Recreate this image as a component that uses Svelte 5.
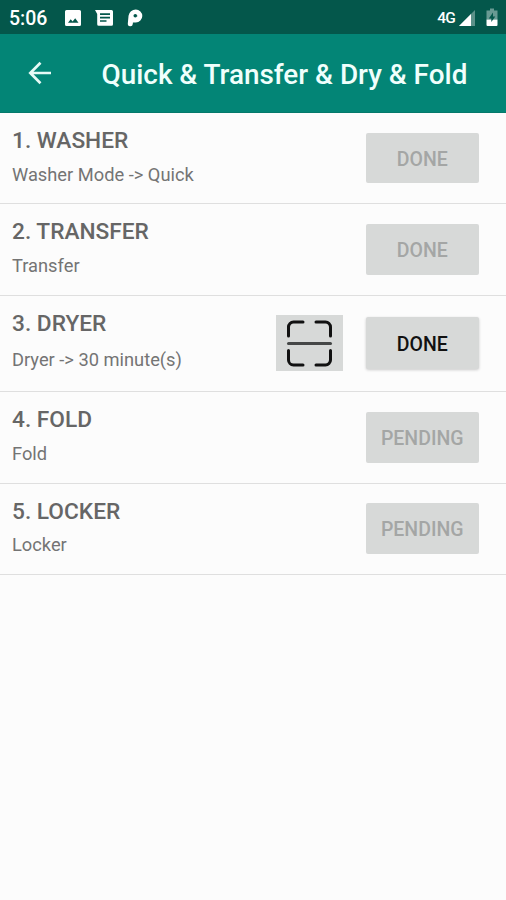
<script>
	let title = 'Quick & Transfer & Dry & Fold';

	let steps = $state([
		{ name: 'WASHER', detail: 'Washer Mode -> Quick', action: 'DONE', active: false },
		{ name: 'TRANSFER', detail: 'Transfer', action: 'DONE', active: false },
		{ name: 'DRYER', detail: 'Dryer -> 30 minute(s)', action: 'DONE', active: true },
		{ name: 'FOLD', detail: 'Fold', action: 'PENDING', active: false },
		{ name: 'LOCKER', detail: 'Locker', action: 'PENDING', active: false }
	]);
</script>

<div class="screen">
	<div class="status-bar">
		<span class="time">5:06</span>
		<svg width="18" height="18" viewBox="0 0 18 18">
			<path fill="#fff" fill-rule="evenodd" d="M2.500 1h13A1.500 1.500 0 0 1 17 2.500v13a1.500 1.500 0 0 1-1.500 1.500h-13A1.500 1.500 0 0 1 1 15.500v-13A1.500 1.500 0 0 1 2.500 1zM4 13.800h10.500l-3.300-4.500-2.600 3.200-1.900-2.200z" />
		</svg>
		<svg class="message" width="20" height="18" viewBox="0 0 20 18">
			<path fill="#fff" d="M1 1h16.500A1.500 1.500 0 0 1 19 2.500v12.700a1.500 1.500 0 0 1-1.500 1.500H4.700a1.500 1.500 0 0 1-1.500-1.500V5z" />
			<path d="M6 5.200h10M6 8.600h10M6 12h6.500" stroke="#04574b" stroke-width="1.700" />
		</svg>
		<svg class="parking" width="17" height="20" viewBox="0 0 17 20">
			<path d="M3.300 15.800 4 8.200A4.900 4.900 0 0 1 8.800 4a4 4 0 0 1 0 8H6" fill="none" stroke="#fff" stroke-width="5" stroke-linecap="round" stroke-linejoin="round" />
			<path d="M4 5h6v7H4z" fill="#fff" />
			<circle cx="8.300" cy="7.700" r="1.800" fill="#04574b" />
		</svg>
		<span class="network">4G</span>
		<svg class="signal" width="18" height="18" viewBox="0 0 18 18">
			<path d="M17 1v16H1z" fill="#fff" opacity=".35" />
			<path d="M13 5v12H1z" fill="#fff" />
		</svg>
		<svg class="battery" width="12" height="19" viewBox="0 0 12 19">
			<path d="M4 .5h4v2h3.500v9H.5v-9H4z" fill="#fff" opacity=".4" />
			<path d="M.5 11.500h11V17a1 1 0 0 1-1 1h-9a1 1 0 0 1-1-1z" fill="#fff" />
			<path d="M7 4.500 2.800 10.500h2.500V14L9.300 8.500H7z" fill="#04574b" />
		</svg>
	</div>

	<header class="app-bar">
		<button class="back" aria-label="Back">
			<svg width="24" height="24" viewBox="0 0 24 24" fill="none" stroke="#e6faf6" stroke-width="2.700">
				<path d="M23 12H2.500M12.500 1.800 2.300 12l10.200 10.200" />
			</svg>
		</button>
		<h1>{title}</h1>
	</header>

	<ul class="steps">
		{#each steps as step, i}
			<li class="step" class:active={step.active}>
				<div class="step-text">
					<h2>{i + 1}. {step.name}</h2>
					<p>{step.detail}</p>
				</div>
				{#if step.active}
					<button class="scan" aria-label="Scan">
						<svg width="47" height="47" viewBox="0 0 47 47" fill="none" stroke="#111" stroke-width="3" stroke-linecap="round">
							<path d="M2.500 16V7a5 5 0 0 1 5-5H17M30 2h9.500a5 5 0 0 1 5 5v9M2.500 30.500V40a5 5 0 0 0 5 5H17M30 45h9.500a5 5 0 0 0 5-5v-9.500" />
							<path d="M2.500 23.500h42" stroke="#454747" />
						</svg>
					</button>
				{/if}
				<button class="action" disabled={!step.active}>{step.action}</button>
			</li>
		{/each}
	</ul>
</div>

<style>
	:global(body) {
		background: #fcfcfc;
	}

	.screen {
		min-height: 900px;
		background: #fcfcfc;
		font-family: Roboto, sans-serif;
	}

	button {
		border: none;
		padding: 0;
		font-family: inherit;
	}

	.status-bar {
		display: flex;
		align-items: center;
		box-sizing: border-box;
		height: 34px;
		padding: 1px 8px 0 9px;
		background: #04574b;
		color: #fff;
	}

	.time {
		width: 55px;
		padding-top: 2px;
		font-size: 19.5px;
		font-weight: 500;
	}

	.message {
		margin-left: 12px;
	}

	.parking {
		margin-left: 13px;
	}

	.network {
		margin-left: auto;
		font-size: 15.5px;
		font-weight: 500;
		letter-spacing: -0.8px;
	}

	.signal {
		margin-left: 3px;
	}

	.battery {
		margin-left: 10px;
	}

	.app-bar {
		display: flex;
		align-items: center;
		box-sizing: border-box;
		height: 79px;
		padding-left: 28px;
		background: #038576;
		border-bottom: 1px solid #05796b;
	}

	.back {
		display: flex;
		width: 73.5px;
		background: none;
	}

	h1 {
		margin: 0;
		padding-top: 3px;
		color: #f0fffc;
		font-size: 27.9px;
		font-weight: 500;
		white-space: nowrap;
	}

	.steps {
		margin: 0;
		padding: 0;
		list-style: none;
	}

	.step {
		display: flex;
		align-items: center;
		box-sizing: border-box;
		height: 91.3px;
		padding: 0 27.5px 0 12px;
		border-bottom: 1.5px solid #dfdfdf;
	}

	.step.active {
		height: 96.7px;
	}

	.step-text {
		flex: 1;
		align-self: flex-start;
		padding-top: 15px;
	}

	h2 {
		margin: 0;
		color: #666;
		font-size: 22.7px;
		font-weight: 500;
		line-height: 26px;
	}

	p {
		margin: 9.5px 0 0;
		color: #747474;
		font-size: 18.3px;
		font-weight: 400;
		line-height: 22px;
	}

	.active p {
		margin-top: 12px;
	}

	.scan {
		display: flex;
		align-items: center;
		justify-content: center;
		width: 67px;
		height: 56px;
		margin-right: 23px;
		background: #d7d9d8;
	}

	.action {
		width: 112.5px;
		height: 50.5px;
		padding-top: 2px;
		border-radius: 2px;
		background: #d7d9d8;
		color: #111;
		font-size: 19.5px;
		font-weight: 500;
	}

	.action:disabled {
		color: #a4a6a5;
	}

	.active .action {
		height: 52px;
		box-shadow: 0 1px 3px rgba(0, 0, 0, 0.2);
	}
</style>
